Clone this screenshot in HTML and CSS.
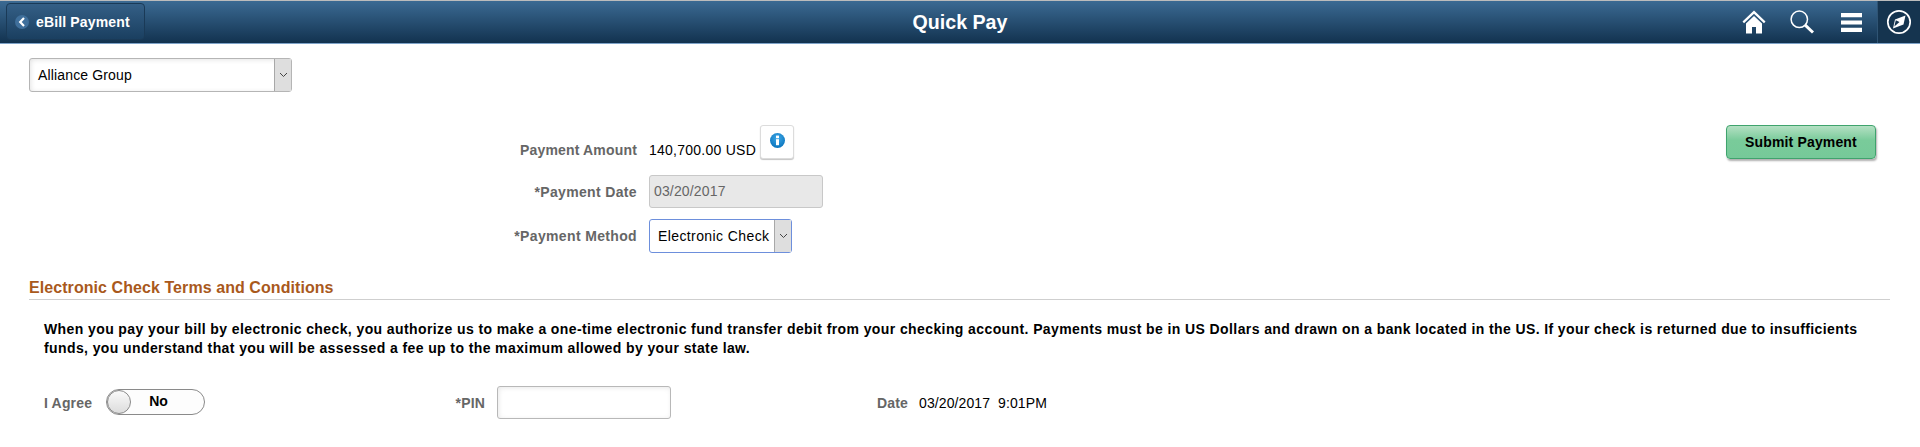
FILE: index.html
```html
<!DOCTYPE html>
<html lang="en">
<head>
<meta charset="utf-8">
<title>Quick Pay</title>
<link rel="stylesheet" href="styles.css">
</head>
<body>
<header class="banner">
  <div class="banner-left">
    <button class="back-btn" type="button">
      <span class="back-circle"><svg width="8" height="10" viewBox="0 0 8 10"><path d="M6 1 2.2 5 6 9" fill="none" stroke="#fff" stroke-width="2.2"/></svg></span>
      <span>eBill Payment</span>
    </button>
  </div>
  <h1 class="banner-title">Quick Pay</h1>
  <div class="banner-right">
    <svg class="ico ico-home" width="24" height="24" viewBox="0 0 24 24"><path d="M12 0.5 0.5 11.5 2 13.2 12 3.8 22 13.2 23.5 11.5 12 0.5z" fill="#fff"/><path d="M12 6 4 13.6V23.5h6v-6.5h4v6.5h6V13.6z" fill="#fff"/></svg>
    <svg class="ico ico-search" width="24" height="24" viewBox="0 0 24 24"><circle cx="9.3" cy="9.3" r="8.2" fill="none" stroke="#fff" stroke-width="1.5"/><path d="M15.2 15.2 23 22.5" stroke="#fff" stroke-width="3"/></svg>
    <svg class="ico ico-menu" width="21" height="19" viewBox="0 0 21 19"><path d="M0 0h21v4.2H0zM0 7.4h21v4.2H0zM0 14.8h21V19H0z" fill="#fff"/></svg>
    <div class="nav-btn">
      <svg width="26" height="26" viewBox="0 0 26 26"><circle cx="13" cy="13" r="11.2" fill="none" stroke="#fff" stroke-width="1.7"/><path d="M19.5 6.5 17.5 15.5 7 19.5 9 10.5z" fill="#fff"/><path d="M13.5 13 8.3 17.6 9.8 11.2z" fill="#14334f"/></svg>
    </div>
  </div>
</header>

<main class="content">
  <div class="select select-group"><span class="select-text">Alliance Group</span><span class="select-arrow"><svg width="9" height="6" viewBox="0 0 9 6"><path d="M1 1 4.5 4.5 8 1" fill="none" stroke="#444" stroke-width="1"/></svg></span></div>

  <section class="payment">
    <div class="form">
      <div class="form-row row-amount">
        <span class="label">Payment Amount</span>
        <span class="value">140,700.00 USD</span>
        <button class="info-btn" type="button"><svg width="15" height="15" viewBox="0 0 15 15"><defs><radialGradient id="g" cx="50%" cy="35%" r="65%"><stop offset="0" stop-color="#3fa9e8"/><stop offset="1" stop-color="#0a74bd"/></radialGradient></defs><circle cx="7.5" cy="7.5" r="7.5" fill="url(#g)"/><rect x="6" y="6.2" width="3" height="6" fill="#fff"/><rect x="6" y="2.6" width="3" height="2.6" fill="#fff"/></svg></button>
      </div>
      <div class="form-row row-date">
        <span class="label">*Payment Date</span>
        <div class="input-disabled">03/20/2017</div>
      </div>
      <div class="form-row row-method">
        <span class="label">*Payment Method</span>
        <div class="select select-method"><span class="select-text">Electronic Check</span><span class="select-arrow"><svg width="9" height="6" viewBox="0 0 9 6"><path d="M1 1 4.5 4.5 8 1" fill="none" stroke="#444" stroke-width="1"/></svg></span></div>
      </div>
    </div>
    <button class="submit-btn" type="button">Submit Payment</button>
  </section>

  <h2 class="section-title">Electronic Check Terms and Conditions</h2>
  <p class="terms">When you pay your bill by electronic check, you authorize us to make a one-time electronic fund transfer debit from your checking account. Payments must be in US Dollars and drawn on a bank located in the US. If your check is returned due to insufficients funds, you understand that you will be assessed a fee up to the maximum allowed by your state law.</p>

  <div class="agree-row">
    <span class="label label-agree">I Agree</span>
    <div class="toggle"><span class="knob"></span><span class="toggle-text">No</span></div>
    <span class="label label-pin">*PIN</span>
    <div class="pin-input"></div>
    <span class="label label-date">Date</span>
    <span class="date-value">03/20/2017&nbsp; 9:01PM</span>
  </div>
</main>
</body>
</html>
```

FILE: styles.css
```css
* { box-sizing: border-box; }
html, body { margin: 0; padding: 0; background: #fff; }
body {
  font-family: "Liberation Sans", Arial, sans-serif;
  font-size: 14px;
  color: #000;
  height: 447px;
  overflow: hidden;
}
.banner {
  height: 44px;
  display: grid;
  grid-template-columns: 1fr auto 1fr;
  align-items: center;
  background: linear-gradient(#3b6a93, #12324f);
  border-top: 1px solid #bcbcbc;
  border-bottom: 1px solid #7da2c8;
}
.banner-left { padding-left: 6px; }
.back-btn {
  height: 37px;
  width: 139px;
  margin-top: -1px;
  display: flex;
  align-items: center;
  gap: 7px;
  padding: 0 0 0 8px;
  border: 1px solid #1a3a57;
  border-radius: 4px;
  background: linear-gradient(#345f86, #1a3f60);
  color: #fff;
  font: bold 14px "Liberation Sans", Arial, sans-serif;
  letter-spacing: 0.15px;
}
.back-circle {
  width: 14px;
  height: 14px;
  border-radius: 50%;
  background: #3f6f9b;
  display: flex;
  align-items: center;
  justify-content: center;
}
.banner-title {
  margin: 0;
  font-size: 19.6px;
  font-weight: bold;
  color: #fff;
}
.banner-right {
  display: flex;
  align-items: center;
  justify-content: flex-end;
  height: 42px;
}
.ico-home { margin-right: 24px; }
.ico-search { margin-right: 27px; }
.ico-menu { margin-right: 15px; }
.nav-btn {
  width: 43px;
  height: 42px;
  display: flex;
  align-items: center;
  justify-content: center;
  background: #15344f;
  border-left: 1px solid #2f5474;
}
.content { padding: 14px 30px 0 29px; }
.select {
  display: flex;
  height: 34px;
  border: 1px solid #b5b5b5;
  border-radius: 3px;
  background: #fff;
  box-shadow: inset 1px 1px 5px #e4e4e4;
}
.select-group { width: 263px; }
.select-text { flex: 1; padding-left: 8px; line-height: 32px; white-space: nowrap; letter-spacing: 0.15px; }
.select-arrow {
  width: 17px;
  display: flex;
  align-items: center;
  justify-content: center;
  background: #dedede;
  border-left: 1px solid #a8a8a8;
}
.payment {
  display: flex;
  justify-content: space-between;
  align-items: flex-start;
  margin-top: 33px;
}
.form {
  display: flex;
  flex-direction: column;
}
.form-row {
  display: grid;
  grid-template-columns: 608px auto auto;
  justify-content: start;
  column-gap: 12px;
  align-items: center;
}
.row-amount { height: 34px; }
.row-date { height: 33px; margin-top: 16px; }
.row-method { height: 34px; margin-top: 11px; }
.label {
  color: #666;
  font-weight: bold;
  text-align: right;
  letter-spacing: 0.17px;
}
.row-date .label, .row-method .label { letter-spacing: 0.35px; }
.value { letter-spacing: 0.25px; margin-right: -8px; }
.row-amount .label, .row-amount .value { position: relative; top: 8px; }
.info-btn {
  width: 34px;
  height: 34px;
  padding: 0 0 3px;
  display: flex;
  align-items: center;
  justify-content: center;
  background: #fff;
  border: 1px solid #dcdcdc;
  border-radius: 3px;
  box-shadow: 0 1px 1px #c4c4c4;
}
.input-disabled {
  width: 174px;
  height: 33px;
  padding-left: 4px;
  line-height: 31px;
  letter-spacing: 0.15px;
  color: #666;
  background: #e8e8e8;
  border: 1px solid #c8c8c8;
  border-radius: 3px;
}
.select-method {
  width: 143px;
  border-color: #6d8fdc;
  box-shadow: none;
}
.select-method .select-text { letter-spacing: 0.4px; padding-left: 8px; }
.submit-btn {
  width: 150px;
  height: 34px;
  margin-right: 14px;
  padding: 0;
  font: bold 14px "Liberation Sans", Arial, sans-serif;
  letter-spacing: 0.15px;
  color: #000;
  background: linear-gradient(#b4e0c3, #79cb9a 45%, #76c999);
  border: 1px solid #3fa36d;
  border-radius: 4px;
  box-shadow: 1px 2px 2px #b0b0b0;
}
.section-title {
  margin: 26px 0 0;
  padding-bottom: 3px;
  height: 21px;
  line-height: 17px;
  font-size: 16px;
  font-weight: bold;
  letter-spacing: 0.07px;
  color: #a9591c;
  border-bottom: 1px solid #cfcfcf;
}
.terms {
  margin: 20px 0 0;
  padding-left: 15px;
  font-weight: bold;
  line-height: 19px;
  letter-spacing: 0.4px;
}
.agree-row {
  display: flex;
  align-items: center;
  margin-top: 28px;
  padding-left: 15px;
  height: 33px;
}
.label-agree { width: 49px; text-align: left; margin-right: 13px; }
.toggle {
  position: relative;
  width: 99px;
  height: 26px;
  border: 1px solid #8a8a8a;
  border-radius: 13px;
  background: #fdfdfd;
  text-align: center;
  line-height: 23px;
  font-weight: bold;
  margin-top: -2px;
}
.knob {
  position: absolute;
  left: 0;
  top: 0;
  width: 24px;
  height: 24px;
  border-radius: 50%;
  border: 1px solid #8a8a8a;
  background: linear-gradient(#fafafa, #dcdcdc);
}
.toggle-text { margin-left: 6px; }
.label-pin { width: 280px; margin-right: 12px; }
.pin-input {
  width: 174px;
  height: 33px;
  background: #fff;
  border: 1px solid #b8b8b8;
  border-radius: 3px;
  box-shadow: inset 1px 1px 5px #e8e8e8;
}
.label-date { width: 237px; margin-right: 11px; }
.date-value { white-space: nowrap; letter-spacing: 0.1px; }
```
